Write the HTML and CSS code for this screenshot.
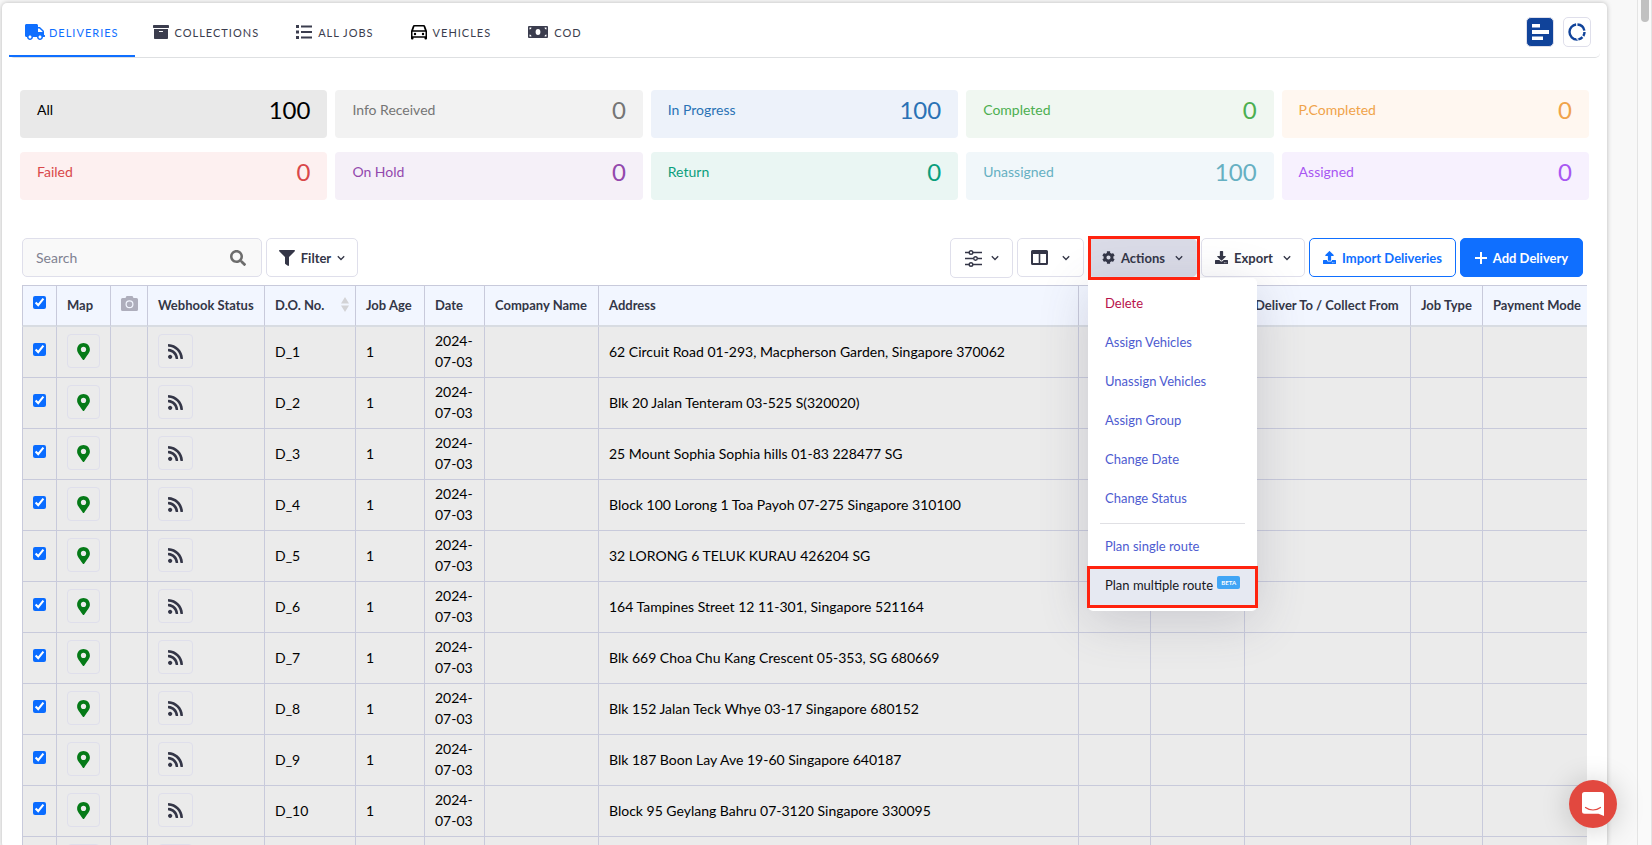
FILE: index.html
```html
<!DOCTYPE html>
<html lang="en">
<head>
  <meta charset="UTF-8">
  <meta name="viewport" content="width=device-width, initial-scale=1.0">
  <title>Deliveries</title>
  <link rel="stylesheet" href="styles.css">
</head>
<body>
  <svg class="sprite" aria-hidden="true">
    <symbol id="i-truck" viewBox="0 0 640 512"><path d="M624 352h-16V243.9c0-12.7-5.1-24.9-14.1-33.9L494 110.1c-9-9-21.2-14.1-33.9-14.1H416V48c0-26.5-21.5-48-48-48H48C21.5 0 0 21.5 0 48v320c0 26.5 21.5 48 48 48h16c0 53 43 96 96 96s96-43 96-96h128c0 53 43 96 96 96s96-43 96-96h48c8.8 0 16-7.2 16-16v-32c0-8.8-7.2-16-16-16zM160 464c-26.5 0-48-21.5-48-48s21.5-48 48-48 48 21.5 48 48-21.5 48-48 48zm320 0c-26.5 0-48-21.5-48-48s21.5-48 48-48 48 21.5 48 48-21.5 48-48 48zm80-208H416V144h44.1l99.9 99.9V256z"/></symbol>
    <symbol id="i-archive" viewBox="0 0 512 512"><path d="M32 448c0 17.7 14.3 32 32 32h384c17.7 0 32-14.3 32-32V160H32v288zm160-212c0-6.6 5.4-12 12-12h104c6.6 0 12 5.4 12 12v8c0 6.6-5.4 12-12 12H204c-6.6 0-12-5.4-12-12v-8zM480 32H32C14.3 32 0 46.3 0 64v48c0 8.8 7.2 16 16 16h480c8.8 0 16-7.2 16-16V64c0-17.7-14.3-32-32-32z"/></symbol>
    <symbol id="i-list" viewBox="0 0 16 16"><path d="M0 1h3v3H0zM0 6.500h3v3H0zM0 12h3v3H0zM5 1.500h11v2H5zM5 7h11v2H5zM5 12.500h11v2H5z"/></symbol>
    <symbol id="i-car" viewBox="0 0 16 16"><path fill-rule="evenodd" d="M3.500 1h9a2 2 0 0 1 1.900 1.400L16 7v7.500a1 1 0 0 1-1 1h-.5a1 1 0 0 1-1-1v-.8h-11v.8a1 1 0 0 1-1 1H1a1 1 0 0 1-1-1V7l1.600-4.600A2 2 0 0 1 3.500 1zM3.500 2.500 2.200 6.300h11.600l-1.300-3.800zM1.500 7.700v4.600h13V7.700zM4 8.800a1.200 1.200 0 1 1 0 2.400 1.200 1.200 0 0 1 0-2.400zM12 8.800a1.200 1.200 0 1 1 0 2.400 1.200 1.200 0 0 1 0-2.400z"/></symbol>
    <symbol id="i-cash" viewBox="0 0 20 12"><path fill-rule="evenodd" d="M1 0h18a1 1 0 0 1 1 1v10a1 1 0 0 1-1 1H1a1 1 0 0 1-1-1V1a1 1 0 0 1 1-1zM10 3a2.400 3 0 1 0 0 6 2.400 3 0 0 0 0-6zM1.500 1.500v2a2 2 0 0 0 2-2zM18.500 1.500h-2a2 2 0 0 0 2 2zM1.500 10.500h2a2 2 0 0 0-2-2zM18.500 10.500v-2a2 2 0 0 0-2 2z"/></symbol>
    <symbol id="i-search" viewBox="0 0 512 512"><path d="M505 442.700L405.300 343c-4.500-4.500-10.600-7-17-7H372c27.600-35.300 44-79.700 44-128C416 93.100 322.900 0 208 0S0 93.100 0 208s93.100 208 208 208c48.300 0 92.700-16.400 128-44v16.300c0 6.400 2.500 12.500 7 17l99.700 99.700c9.400 9.400 24.600 9.400 33.900 0l28.300-28.300c9.400-9.400 9.400-24.600.1-34zM208 336c-70.700 0-128-57.200-128-128 0-70.700 57.200-128 128-128 70.700 0 128 57.200 128 128 0 70.700-57.200 128-128 128z"/></symbol>
    <symbol id="i-filter" viewBox="0 0 512 512"><path d="M487.976 0H24.028C2.710 0-8.047 25.866 7.058 40.971L192 225.941V432c0 7.831 3.821 15.170 10.237 19.662l80 55.980C298.020 518.690 320 507.493 320 487.980V225.941l184.947-184.970C520.021 25.896 509.338 0 487.976 0z"/></symbol>
    <symbol id="i-chevron" viewBox="0 0 8 8"><path d="M0.800 2.200 4 5.500 7.200 2.200" fill="none" stroke="currentColor" stroke-width="1.300"/></symbol>
    <symbol id="i-sliders" viewBox="0 0 17 17"><g fill="none" stroke="currentColor" stroke-width="1.400"><path d="M0 2.500h4M8 2.500h9M0 8.500h8.500M12.500 8.500H17M0 14.500h4M8 14.500h9"/><circle cx="6" cy="2.500" r="1.800"/><circle cx="10.500" cy="8.500" r="1.800"/><circle cx="6" cy="14.500" r="1.800"/></g></symbol>
    <symbol id="i-columns" viewBox="0 0 17 15"><path fill-rule="evenodd" d="M1.500 0h14A1.500 1.500 0 0 1 17 1.500v12a1.500 1.500 0 0 1-1.500 1.500h-14A1.500 1.500 0 0 1 0 13.500v-12A1.500 1.500 0 0 1 1.500 0zM2 4v9h5.700V4zM9.300 4v9H15V4z"/></symbol>
    <symbol id="i-cog" viewBox="0 0 512 512"><path d="M487.400 315.700l-42.600-24.600c4.300-23.200 4.300-47 0-70.200l42.600-24.600c4.900-2.800 7.100-8.600 5.500-14-11.100-35.600-30-67.800-54.700-94.600-3.800-4.100-10-5.100-14.800-2.300L380.800 110c-17.900-15.400-38.500-27.300-60.800-35.100V25.800c0-5.600-3.900-10.500-9.400-11.700-36.700-8.200-74.300-7.800-109.200 0-5.500 1.200-9.400 6.100-9.400 11.700V75c-22.200 7.900-42.800 19.800-60.800 35.100L88.700 85.500c-4.900-2.800-11-1.900-14.800 2.300-24.700 26.700-43.600 58.900-54.700 94.600-1.700 5.400.6 11.200 5.500 14L67.300 221c-4.300 23.200-4.300 47 0 70.200l-42.600 24.600c-4.900 2.800-7.100 8.600-5.500 14 11.100 35.600 30 67.800 54.700 94.600 3.800 4.100 10 5.100 14.800 2.300l42.600-24.600c17.900 15.400 38.500 27.300 60.800 35.100v49.200c0 5.600 3.900 10.500 9.400 11.700 36.700 8.200 74.300 7.800 109.200 0 5.500-1.200 9.400-6.100 9.400-11.700v-49.200c22.200-7.900 42.800-19.800 60.800-35.100l42.600 24.600c4.900 2.800 11 1.900 14.800-2.300 24.700-26.700 43.600-58.900 54.700-94.600 1.500-5.500-.7-11.300-5.600-14.100zM256 336c-44.100 0-80-35.900-80-80s35.900-80 80-80 80 35.900 80 80-35.900 80-80 80z"/></symbol>
    <symbol id="i-download" viewBox="0 0 512 512"><path d="M216 0h80c13.300 0 24 10.700 24 24v168h87.700c17.800 0 26.700 21.500 14.100 34.100L269.700 378.300c-7.500 7.500-19.800 7.500-27.300 0L90.100 226.100c-12.600-12.600-3.700-34.100 14.100-34.100H192V24c0-13.300 10.700-24 24-24zm296 376v112c0 13.300-10.700 24-24 24H24c-13.300 0-24-10.700-24-24V376c0-13.300 10.700-24 24-24h146.700l49 49c20.100 20.100 52.500 20.100 72.600 0l49-49H488c13.300 0 24 10.700 24 24zm-124 88c0-11-9-20-20-20s-20 9-20 20 9 20 20 20 20-9 20-20zm64 0c0-11-9-20-20-20s-20 9-20 20 9 20 20 20 20-9 20-20z"/></symbol>
    <symbol id="i-upload" viewBox="0 0 512 512"><path d="M296 384h-80c-13.300 0-24-10.700-24-24V192h-87.700c-17.800 0-26.700-21.500-14.100-34.100L242.300 5.700c7.500-7.500 19.800-7.500 27.300 0l152.200 152.200c12.600 12.600 3.700 34.100-14.100 34.100H320v168c0 13.300-10.700 24-24 24zm216-8v112c0 13.300-10.700 24-24 24H24c-13.300 0-24-10.700-24-24V376c0-13.300 10.700-24 24-24h136v8c0 30.900 25.100 56 56 56h80c30.900 0 56-25.100 56-56v-8h136c13.300 0 24 10.700 24 24zm-124 88c0-11-9-20-20-20s-20 9-20 20 9 20 20 20 20-9 20-20zm64 0c0-11-9-20-20-20s-20 9-20 20 9 20 20 20 20-9 20-20z"/></symbol>
    <symbol id="i-plus" viewBox="0 0 12 12"><path d="M6 0.500v11M0.500 6h11" fill="none" stroke="currentColor" stroke-width="2" stroke-linecap="round"/></symbol>
    <symbol id="i-camera" viewBox="0 0 17 15"><path fill-rule="evenodd" d="M5.500 0h6l1 2H15.500A1.500 1.500 0 0 1 17 3.500v10a1.500 1.500 0 0 1-1.500 1.500h-14A1.500 1.500 0 0 1 0 13.500v-10A1.500 1.500 0 0 1 1.500 2h3zM8.500 4.300a4 4 0 1 0 0 8 4 4 0 0 0 0-8zM8.500 5.500a2.800 2.800 0 1 1 0 5.600 2.800 2.800 0 0 1 0-5.600z"/></symbol>
    <symbol id="i-sort" viewBox="0 0 8 15"><path d="M4 0 8 6.500H0zM4 15 0 8.500h8z"/></symbol>
    <symbol id="i-pin" viewBox="0 0 384 512"><path d="M172.268 501.670C26.970 291.031 0 269.413 0 192 0 85.961 85.961 0 192 0s192 85.961 192 192c0 77.413-26.970 99.031-172.268 309.670-9.535 13.774-29.930 13.773-39.464 0zM192 272c44.183 0 80-35.817 80-80s-35.817-80-80-80-80 35.817-80 80 35.817 80 80 80z"/></symbol>
    <symbol id="i-rss" viewBox="0 32 448 448"><path d="M128.081 415.959c0 35.369-28.672 64.041-64.041 64.041S0 451.328 0 415.959s28.672-64.041 64.041-64.041 64.040 28.673 64.040 64.041zm175.660 47.250c-8.354-154.600-132.185-278.587-286.950-286.950C7.656 175.765 0 183.105 0 192.253v48.069c0 8.415 6.490 15.472 14.887 16.018 111.832 7.284 201.473 96.702 208.772 208.772.547 8.397 7.604 14.887 16.018 14.887h48.069c9.149.001 16.489-7.655 15.995-16.790zm144.249.288C439.596 229.677 251.465 40.445 16.503 32.010 7.473 31.686 0 38.981 0 48.016v48.068c0 8.625 6.835 15.645 15.453 15.999 191.179 7.839 344.627 161.316 352.465 352.465.353 8.618 7.373 15.453 15.999 15.453h48.068c9.034-.001 16.329-7.474 16.005-16.504z"/></symbol>
    <symbol id="i-bars" viewBox="0 0 17 16"><path d="M0 0h8v3.500H0zM0 6h17v4H0zM0 12.500h11V16H0z"/></symbol>
    <symbol id="i-ring" viewBox="0 0 18 18"><circle cx="9" cy="9" r="7.500" fill="none" stroke="currentColor" stroke-width="2.400" pathLength="100" stroke-dasharray="9 3 10 3 48 3 21 3"/></symbol>
    <symbol id="i-chat" viewBox="0 0 22 24"><path fill="#fff" d="M2.500 0h17A2.500 2.500 0 0 1 22 2.500V24l-5.500-2.300h-14A2.500 2.500 0 0 1 0 19.200V2.500A2.500 2.500 0 0 1 2.500 0z"/><path d="M3.500 15.500c4.500 3.300 10.500 3.300 15 0" fill="none" stroke="#e2483f" stroke-width="1.200" stroke-linecap="round"/></symbol>
  </svg>

  <div class="page">
    <main class="card">
      <div class="topbar">
        <nav class="tabs">
          <a href="#" class="tab active"><svg class="icon wide"><use href="#i-truck"/></svg>DELIVERIES</a>
          <a href="#" class="tab"><svg class="icon"><use href="#i-archive"/></svg>COLLECTIONS</a>
          <a href="#" class="tab"><svg class="icon"><use href="#i-list"/></svg>ALL JOBS</a>
          <a href="#" class="tab vehicles"><svg class="icon"><use href="#i-car"/></svg>VEHICLES</a>
          <a href="#" class="tab"><svg class="icon wide"><use href="#i-cash"/></svg>COD</a>
        </nav>
        <div class="views">
          <button type="button" class="view on" aria-label="List view"><svg width="17" height="16"><use href="#i-bars"/></svg></button>
          <button type="button" class="view" aria-label="Chart view"><svg width="18" height="18"><use href="#i-ring"/></svg></button>
        </div>
      </div>

      <div class="stats">
        <a href="#" class="stat all"><span>All</span><b>100</b></a>
        <a href="#" class="stat info"><span>Info Received</span><b>0</b></a>
        <a href="#" class="stat progress"><span>In Progress</span><b>100</b></a>
        <a href="#" class="stat completed"><span>Completed</span><b>0</b></a>
        <a href="#" class="stat partial"><span>P.Completed</span><b>0</b></a>
        <a href="#" class="stat failed"><span>Failed</span><b>0</b></a>
        <a href="#" class="stat hold"><span>On Hold</span><b>0</b></a>
        <a href="#" class="stat return"><span>Return</span><b>0</b></a>
        <a href="#" class="stat unassigned"><span>Unassigned</span><b>100</b></a>
        <a href="#" class="stat assigned"><span>Assigned</span><b>0</b></a>
      </div>

      <div class="toolbar">
        <div class="search">
          <input type="text" placeholder="Search" aria-label="Search">
          <svg width="16" height="16"><use href="#i-search"/></svg>
        </div>
        <button type="button" class="btn filter"><svg width="16" height="16"><use href="#i-filter"/></svg>Filter<svg width="8" height="8"><use href="#i-chevron"/></svg></button>
        <div class="tools">
          <button type="button" class="btn settings" aria-label="Settings"><svg width="17" height="17"><use href="#i-sliders"/></svg><svg width="8" height="8"><use href="#i-chevron"/></svg></button>
          <button type="button" class="btn columns" aria-label="Columns"><svg width="17" height="15"><use href="#i-columns"/></svg><svg width="8" height="8"><use href="#i-chevron"/></svg></button>
          <div class="dropdown">
            <button type="button" class="btn actions"><svg width="13" height="13"><use href="#i-cog"/></svg>Actions<svg class="caret" width="8" height="8"><use href="#i-chevron"/></svg></button>
            <div class="menu">
              <a href="#" class="delete">Delete</a>
              <a href="#">Assign Vehicles</a>
              <a href="#">Unassign Vehicles</a>
              <a href="#">Assign Group</a>
              <a href="#">Change Date</a>
              <a href="#">Change Status</a>
              <hr>
              <a href="#">Plan single route</a>
              <a href="#" class="selected">Plan multiple route <span class="beta">BETA</span></a>
            </div>
          </div>
          <button type="button" class="btn export"><svg width="13" height="13"><use href="#i-download"/></svg>Export<svg class="caret" width="8" height="8"><use href="#i-chevron"/></svg></button>
          <button type="button" class="btn import"><svg width="13" height="13"><use href="#i-upload"/></svg>Import Deliveries</button>
          <button type="button" class="btn add"><svg width="12" height="12"><use href="#i-plus"/></svg>Add Delivery</button>
        </div>
      </div>

      <div class="table-wrap">
        <table>
          <colgroup>
            <col class="c-check"><col class="c-map"><col class="c-photo"><col class="c-hook"><col class="c-do">
            <col class="c-age"><col class="c-date"><col class="c-company"><col><col class="c-a"><col class="c-b">
            <col class="c-to"><col class="c-type"><col class="c-pay">
          </colgroup>
          <thead>
            <tr>
              <th class="check"><input type="checkbox" aria-label="Select all" checked></th>
              <th>Map</th>
              <th class="photo"><svg width="17" height="15"><use href="#i-camera"/></svg></th>
              <th>Webhook Status</th>
              <th><div class="sort">D.O. No.<svg width="8" height="15"><use href="#i-sort"/></svg></div></th>
              <th>Job Age</th>
              <th>Date</th>
              <th>Company Name</th>
              <th>Address</th>
              <th></th>
              <th></th>
              <th>Deliver To / Collect From</th>
              <th>Job Type</th>
              <th>Payment Mode</th>
            </tr>
          </thead>
          <tbody id="jobs"></tbody>
        </table>
      </div>
    </main>
    <div class="scrollbar"><div class="thumb"></div></div>
  </div>

  <button type="button" class="chat" aria-label="Open chat"><svg width="22" height="24"><use href="#i-chat"/></svg></button>

  <script>
    const addresses = [
      '62 Circuit Road 01-293, Macpherson Garden, Singapore 370062',
      'Blk 20 Jalan Tenteram 03-525 S(320020)',
      '25 Mount Sophia Sophia hills 01-83 228477 SG',
      'Block 100 Lorong 1 Toa Payoh 07-275 Singapore 310100',
      '32 LORONG 6 TELUK KURAU 426204 SG',
      '164 Tampines Street 12 11-301, Singapore 521164',
      'Blk 669 Choa Chu Kang Crescent 05-353, SG 680669',
      'Blk 152 Jalan Teck Whye 03-17 Singapore 680152',
      'Blk 187 Boon Lay Ave 19-60 Singapore 640187',
      'Block 95 Geylang Bahru 07-3120 Singapore 330095',
      ''
    ];

    document.getElementById('jobs').innerHTML = addresses.map((address, i) => `
      <tr>
        <td class="check"><input type="checkbox" aria-label="Select job ${i + 1}" checked></td>
        <td><button type="button" class="cell-btn pin" aria-label="Map"><svg width="13" height="17"><use href="#i-pin"/></svg></button></td>
        <td></td>
        <td><button type="button" class="cell-btn hook" aria-label="Webhook"><svg width="15" height="15"><use href="#i-rss"/></svg></button></td>
        <td>${address ? 'D_' + (i + 1) : ''}</td>
        <td>${address ? 1 : ''}</td>
        <td>${address ? '2024-<br>07-03' : ''}</td>
        <td></td>
        <td>${address}</td>
        <td></td><td></td><td></td><td></td><td></td>
      </tr>`).join('');
  </script>
</body>
</html>
```
FILE: styles.css
```css
* {
  box-sizing: border-box;
}
body {
  margin: 0;
  background-color: #f8f8f8;
  font-family: Lato, "Liberation Sans", sans-serif;
  font-size: 14px;
  color: #000;
}
a {
  text-decoration: none;
}
button {
  font-family: inherit;
  cursor: pointer;
}
svg {
  fill: currentColor;
  flex: none;
}
.sprite {
  position: absolute;
  width: 0;
  height: 0;
}
.page {
  display: flex;
  height: 100vh;
  overflow: hidden;
  padding-top: 3px;
}
.card {
  flex: 1;
  min-width: 0;
  height: 100vh;
  margin: 0 30px 0 2px;
  padding: 0 20px;
  background-color: #fff;
  border-radius: 5px;
  box-shadow: 0 0 5px rgba(0,0,0,0.25);
}
.scrollbar {
  width: 15px;
  margin-top: -3px;
  background-color: #fafafa;
  border: solid #e4e4e4;
  border-width: 0 1px;
}
.thumb {
  width: 8px;
  height: 22px;
  margin-left: 3px;
  background-color: #c1c1c1;
  border-radius: 0 0 4px 4px;
}

/* tabs */
.topbar {
  display: flex;
  justify-content: space-between;
  align-items: center;
  height: 55px;
  margin: 0 -13px;
  border-bottom: 1px solid #dee0e2;
  border-radius: 5px;
}
.tabs {
  display: flex;
  align-self: stretch;
}
.tab {
  display: flex;
  align-items: center;
  gap: 6px;
  padding: 6px 19px 0 18px;
  border-bottom: 2px solid transparent;
  font-size: 11px;
  letter-spacing: 1px;
  color: #3b3d4e;
}
.tab.active {
  gap: 4px;
  padding: 6px 16px 0;
  color: #0f6fff;
  border-color: #0f6fff;
}
.tab.vehicles svg {
  color: #000;
}
.icon {
  width: 16px;
  height: 16px;
}
.icon.wide {
  width: 20px;
}
.views {
  display: flex;
  gap: 9px;
  margin-right: 9px;
  padding-top: 3px;
}
.view {
  display: flex;
  align-items: center;
  justify-content: center;
  width: 28px;
  height: 30px;
  padding: 0;
  border: 1px solid #dfdfeb;
  border-radius: 5px;
  background-color: #fff;
  color: #10439a;
}
.view.on {
  background-color: #10439a;
  color: #fff;
}

/* status counters */
.stats {
  display: grid;
  grid-template-columns: repeat(5, 1fr);
  gap: 14px 8px;
  margin: 32px -2px 0;
}
.stat {
  display: flex;
  justify-content: space-between;
  height: 48px;
  padding: 5px 17px;
  border-radius: 4px;
  line-height: 30px;
}
.stat b {
  font-size: 24px;
  font-weight: normal;
}
.all { background-color: #e9e9e9; color: #000; }
.info { background-color: #f2f2f2; color: #757575; }
.progress { background-color: #edf2fa; color: #2a72b5; }
.completed { background-color: #f0f7f1; color: #4caf50; }
.partial { background-color: #fff7f0; color: #f0a34a; }
.failed { background-color: #fdf0f0; color: #d9484a; }
.hold { background-color: #f5f0f8; color: #9348ad; }
.return { background-color: #eaf6f3; color: #0a9e7c; }
.unassigned { background-color: #f1f7fa; color: #66b0c2; }
.assigned { background-color: #f7f1fe; color: #a857f2; }

/* toolbar */
.toolbar {
  display: flex;
  gap: 4px;
  height: 47px;
  margin-top: 38px;
}
.search {
  display: flex;
  align-items: center;
  width: 240px;
  height: 39px;
  padding: 0 15px 0 13px;
  background-color: #f9f9f9;
  border: 1px solid #dfdfeb;
  border-radius: 5px;
  color: #6d6d6d;
}
.search input {
  flex: 1;
  min-width: 0;
  padding: 0;
  border: 0;
  outline: 0;
  background: none;
  font-family: inherit;
  font-size: 14px;
}
.search input::placeholder {
  color: #808191;
}
.btn {
  display: flex;
  align-items: center;
  justify-content: center;
  gap: 6px;
  height: 39px;
  padding: 0;
  background-color: #fff;
  border: 1px solid #dfdfeb;
  border-radius: 5px;
  font-size: 13px;
  font-weight: bold;
  color: #343647;
  white-space: nowrap;
}
.tools {
  display: flex;
  gap: 4px;
  margin: 0 4px 0 auto;
}
.caret {
  margin-left: 4px;
}
.filter { width: 92px; }
.settings { width: 63px; height: 40px; gap: 9px; }
.columns { width: 67px; gap: 14px; }
.actions { width: 109px; background-color: #dadbe7; }
.export { width: 104px; }
.import { width: 147px; border-color: #0f6fff; color: #0f6fff; }
.add { width: 123px; background-color: #0f6fff; border-color: #0f6fff; color: #fff; }

.dropdown {
  position: relative;
}
.dropdown::after {
  content: "";
  position: absolute;
  inset: -2px -3px 5px 0;
  border: 3px solid #ff230f;
  pointer-events: none;
}
.menu {
  position: absolute;
  top: 40px;
  left: 0;
  width: 169px;
  padding: 6px 0;
  background-color: #fff;
  border-radius: 0 5px 5px 5px;
  box-shadow: 0 10px 50px rgba(70,70,100,0.2);
}
.menu a {
  display: block;
  height: 39px;
  padding-left: 17px;
  font-size: 13px;
  line-height: 39px;
  color: #4d5bd0;
  white-space: nowrap;
}
.menu hr {
  height: 1px;
  margin: 5px 12px 3px;
  border: 0;
  background-color: #e0e0e4;
}
.menu .delete {
  color: #b8114b;
}
.menu .selected {
  position: relative;
  background-color: #e6e9f2;
  color: #16181f;
}
.menu .selected::after {
  content: "";
  position: absolute;
  inset: 0 -1px -3px;
  border: 3px solid #ff230f;
}
.beta {
  display: inline-block;
  height: 13px;
  margin-left: 1px;
  padding: 0 4px;
  background-color: #41a5f5;
  border-radius: 2px;
  font-size: 6px;
  font-weight: bold;
  line-height: 14px;
  color: #fff;
  vertical-align: 5px;
}

/* jobs table */
.table-wrap {
  overflow: hidden;
}
table {
  width: 100%;
  table-layout: fixed;
  border-collapse: separate;
  border-spacing: 0;
}
.c-check { width: 34px; }
.c-map { width: 54px; }
.c-photo { width: 37px; }
.c-hook { width: 117px; }
.c-do { width: 91px; }
.c-age { width: 69px; }
.c-date { width: 60px; }
.c-company { width: 114px; }
.c-a { width: 72px; }
.c-b { width: 94px; }
.c-to { width: 166px; }
.c-type { width: 72px; }
.c-pay { width: 105px; }
th {
  height: 42px;
  padding: 0 0 2px 10px;
  background-color: #f2f6ff;
  border: solid #c8cadb;
  border-width: 1px 0 2px 1px;
  border-bottom-color: #d8dce2;
  font-size: 13px;
  text-align: left;
  white-space: nowrap;
  color: #343647;
}
td {
  height: 51px;
  padding: 0 0 2px 10px;
  background-color: #ebebeb;
  border: solid #c8cadb;
  border-width: 0 0 1px 1px;
  line-height: 21px;
}
.photo svg {
  display: block;
  color: #aeaebc;
  margin-bottom: 3px;
}
.sort {
  display: flex;
  justify-content: space-between;
  align-items: center;
  padding-right: 6px;
}
.sort svg {
  color: #d3d3d6;
}
.check input {
  display: block;
  width: 13px;
  height: 13px;
  margin: 0 0 4px;
  accent-color: #0a6cff;
}
.cell-btn {
  display: flex;
  align-items: center;
  justify-content: center;
  height: 34px;
  padding: 0;
  background: none;
  border: 1px solid #dfdfeb;
  border-radius: 4px;
}
.pin { width: 33px; color: #057a17; }
.hook { width: 35px; color: #343647; }

.chat {
  position: fixed;
  right: 35px;
  bottom: 17px;
  display: flex;
  align-items: center;
  justify-content: center;
  width: 48px;
  height: 48px;
  padding: 0;
  border: 0;
  border-radius: 50%;
  background-color: #e2483f;
  box-shadow: 0 2px 30px rgba(0,0,0,0.2);
}
```
